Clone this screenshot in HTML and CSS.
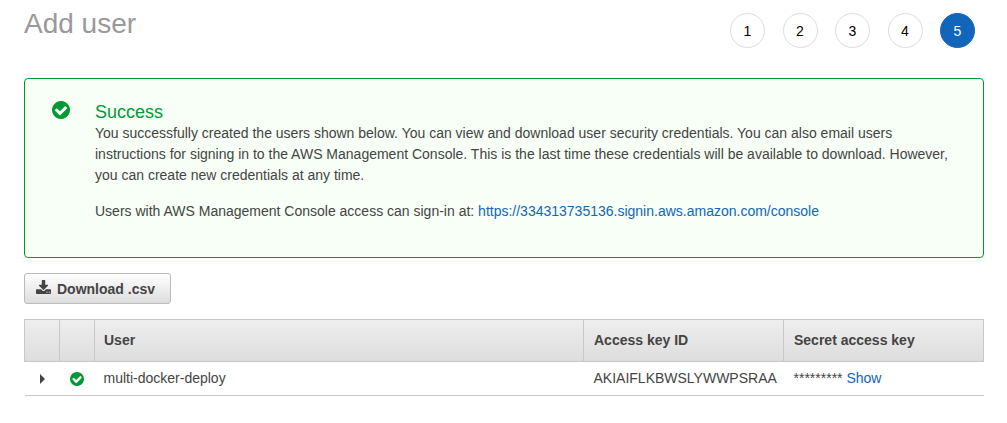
FILE: index.html
```html
<!DOCTYPE html>
<html lang="en">
<head>
    <meta charset="UTF-8">
    <meta name="viewport" content="width=device-width, initial-scale=1.0">
    <title>Add user</title>
    <link rel="stylesheet" href="styles.css">
</head>
<body>
    <svg class="symbols" aria-hidden="true">
        <symbol id="check" viewBox="128 128 1536 1536">
            <path d="M1412 734q0-28-18-46l-91-90q-19-19-45-19t-45 19l-408 407-226-226q-19-19-45-19t-45 19l-91 90q-18 18-18 46 0 27 18 45l362 362q19 19 45 19 27 0 46-19l543-543q18-18 18-45zm252 162q0 209-103 385.5t-279.5 279.5-385.5 103-385.5-103-279.5-279.5-103-385.5 103-385.5 279.5-279.5 385.5-103 385.5 103 279.5 279.5 103 385.5z"/>
        </symbol>
    </svg>
    <header class="header">
        <h1>Add user</h1>
        <ol class="steps">
            <li>1</li>
            <li>2</li>
            <li>3</li>
            <li>4</li>
            <li class="active" aria-current="step">5</li>
        </ol>
    </header>
    <main>
        <section class="alert">
            <svg class="alert-icon"><use href="#check"/></svg>
            <div class="alert-body">
                <h2>Success</h2>
                <p>You successfully created the users shown below. You can view and download user security credentials. You can also email users instructions for signing in to the AWS Management Console. This is the last time these credentials will be available to download. However, you can create new credentials at any time.</p>
                <p>Users with AWS Management Console access can sign-in at: <a href="https://334313735136.signin.aws.amazon.com/console">https://334313735136.signin.aws.amazon.com/console</a></p>
            </div>
        </section>
        <button type="button" class="download">
            <svg class="download-icon" viewBox="64 0 1664 1536" aria-hidden="true">
                <path d="M1344 1344q0-26-19-45t-45-19-45 19-19 45 19 45 45 19 45-19 19-45zm256 0q0-26-19-45t-45-19-45 19-19 45 19 45 45 19 45-19 19-45zm128-224v320q0 40-28 68t-68 28h-1472q-40 0-68-28t-28-68v-320q0-40 28-68t68-28h465l135 136q58 56 136 56t136-56l136-136h464q40 0 68 28t28 68zm-325-569q17 41-14 70l-448 448q-18 19-45 19t-45-19l-448-448q-31-29-14-70 17-39 59-39h256v-448q0-26 19-45t45-19h256q26 0 45 19t19 45v448h256q42 0 59 39z"/>
            </svg>
            Download .csv
        </button>
        <table class="users">
            <thead>
                <tr>
                    <th class="icon-col"></th>
                    <th class="icon-col"></th>
                    <th>User</th>
                    <th class="key-col">Access key ID</th>
                    <th class="key-col">Secret access key</th>
                </tr>
            </thead>
            <tbody>
                <tr>
                    <td class="icon-col">
                        <button type="button" class="expand" aria-label="Expand">
                            <svg viewBox="0 0 5 10"><path d="M0 0l5 5-5 5z"/></svg>
                        </button>
                    </td>
                    <td class="icon-col"><svg class="row-icon"><use href="#check"/></svg></td>
                    <td>multi-docker-deploy</td>
                    <td class="key-col">AKIAIFLKBWSLYWWPSRAA</td>
                    <td class="key-col">********* <a href="#">Show</a></td>
                </tr>
            </tbody>
        </table>
    </main>
</body>
</html>
```
FILE: styles.css
```css
body {
    margin: 0;
    padding: 8px 23px 24px 24px;
    background-color: #fff;
    color: #444;
    font-family: "Liberation Sans", Arial, sans-serif;
    font-size: 14px;
    line-height: 21px;
}
h1, h2, p {
    margin: 0;
    font-weight: normal;
}
a {
    color: #1166bb;
    text-decoration: none;
}
a:hover {
    text-decoration: underline;
}
.symbols {
    display: none;
}
.header {
    display: flex;
    justify-content: space-between;
    margin-bottom: 30px;
}
.header h1 {
    color: #999;
    font-size: 28px;
    line-height: 32px;
}
.steps {
    display: flex;
    justify-content: space-between;
    width: 245px;
    margin: 5px 9px 0 0;
    padding: 0;
    list-style: none;
}
.steps li {
    box-sizing: border-box;
    width: 35px;
    height: 35px;
    border: 1px solid #ddd;
    border-radius: 50%;
    color: #000;
    line-height: 34px;
    text-align: center;
}
.steps .active {
    background-color: #1166bb;
    border-color: #1166bb;
    color: #fff;
}
.alert {
    display: flex;
    gap: 25px;
    margin-bottom: 15px;
    padding: 22px 28px 35px 27px;
    background-color: #f7fff7;
    border: 1px solid #093;
    border-radius: 4px;
}
.alert-icon {
    flex: none;
    width: 18px;
    height: 18px;
    fill: #093;
}
.alert-body h2 {
    color: #093;
    font-size: 18px;
    line-height: 22px;
}
.alert-body p + p {
    margin-top: 15px;
}
.download {
    display: flex;
    align-items: center;
    gap: 6px;
    height: 31px;
    margin-bottom: 15px;
    padding: 0 15px 0 11px;
    background: linear-gradient(#fff, #ddd);
    border: 1px solid #bbb;
    border-radius: 3px;
    color: #444;
    font-family: inherit;
    font-size: 14px;
    font-weight: bold;
    cursor: pointer;
}
.download-icon {
    width: 15px;
    height: 14px;
    margin-bottom: 3px;
    fill: #444;
}
.users {
    width: 100%;
    border-collapse: collapse;
    table-layout: fixed;
}
.users th {
    height: 41px;
    padding: 0 9px;
    border: 1px solid #c8c8c8;
    text-align: left;
}
.users thead tr {
    background: linear-gradient(#eee, #ddd);
}
.users td {
    height: 33px;
    padding: 0 0 0 9px;
    border-bottom: 1px solid #c8c8c8;
    white-space: nowrap;
}
.users .icon-col {
    width: 34px;
    padding: 0;
    text-align: center;
}
.users .key-col {
    width: 189px;
    padding: 0 0 0 10px;
}
.row-icon {
    display: block;
    width: 14px;
    height: 14px;
    margin: 0 auto;
    fill: #093;
}
.expand {
    display: block;
    margin: 0 auto;
    padding: 0;
    background: none;
    border: none;
    cursor: pointer;
}
.expand svg {
    display: block;
    width: 5px;
    height: 10px;
    fill: #444;
}
```
